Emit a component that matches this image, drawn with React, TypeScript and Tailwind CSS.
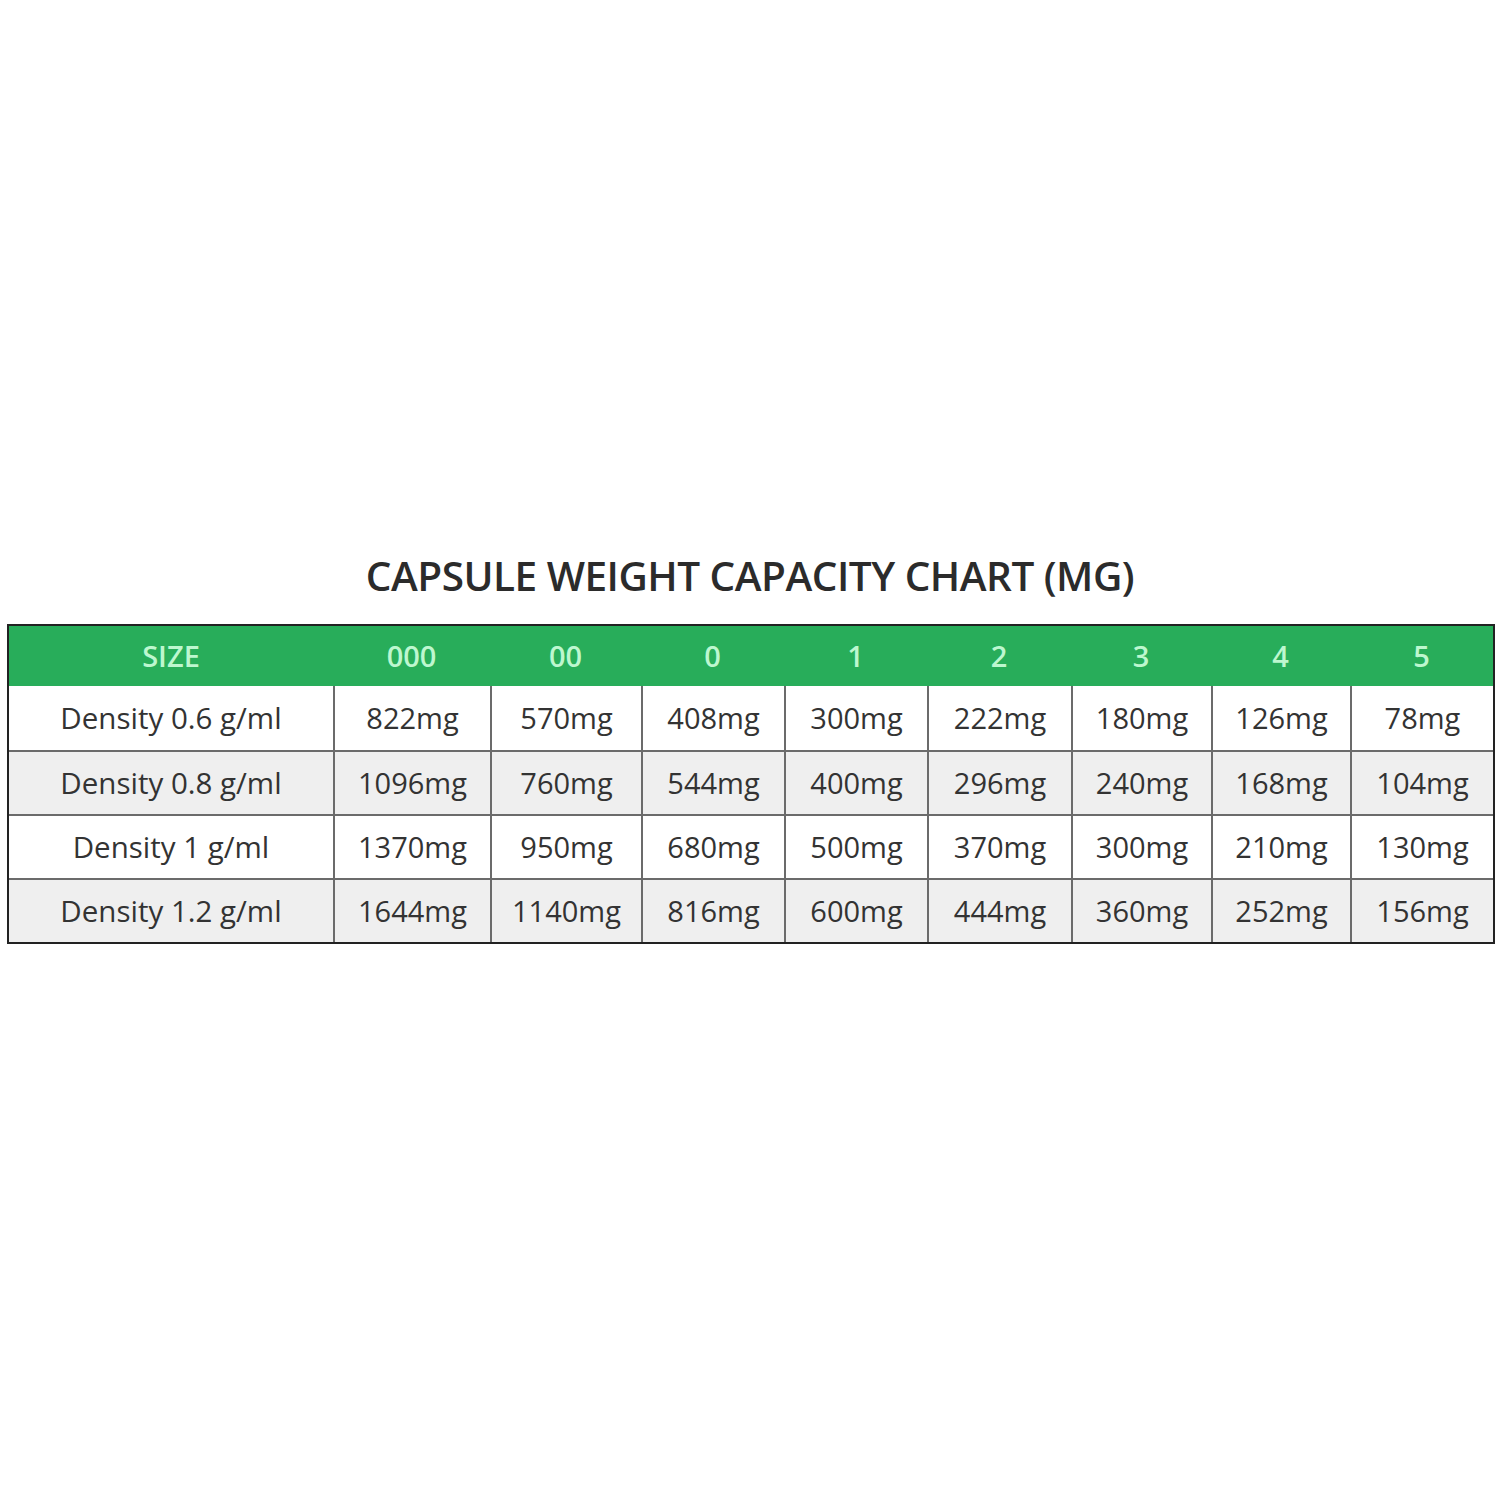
const sizes = ["000", "00", "0", "1", "2", "3", "4", "5"];

const rows = [
  { label: "Density 0.6 g/ml", values: ["822mg", "570mg", "408mg", "300mg", "222mg", "180mg", "126mg", "78mg"] },
  { label: "Density 0.8 g/ml", values: ["1096mg", "760mg", "544mg", "400mg", "296mg", "240mg", "168mg", "104mg"] },
  { label: "Density 1 g/ml", values: ["1370mg", "950mg", "680mg", "500mg", "370mg", "300mg", "210mg", "130mg"] },
  { label: "Density 1.2 g/ml", values: ["1644mg", "1140mg", "816mg", "600mg", "444mg", "360mg", "252mg", "156mg"] },
];

const cols = "grid grid-cols-[324px_157px_151px_143px_143px_144px_140px_139px_143px]";

export default function App() {
  return (
    <div className="h-[1500px] w-[1500px] bg-white font-['Open_Sans',sans-serif]">
      <div className="pt-[548px]">
        <h1 className="text-center text-[40.5px] font-semibold leading-[56px] tracking-[-0.5px] text-[#2b2b2b]">
          CAPSULE WEIGHT CAPACITY CHART (MG)
        </h1>
      </div>

      <div className="ml-[7px] mt-[20px] w-[1488px] border-2 border-[#222]">
        <div className={`${cols} h-[60px] bg-[#28ad5a]`}>
          <div className="flex items-center justify-center text-[29px] font-semibold text-[#bdf7cf]">SIZE</div>
          {sizes.map((s) => (
            <div key={s} className="flex items-center justify-center text-[29px] font-semibold text-[#bdf7cf]">
              {s}
            </div>
          ))}
        </div>

        {rows.map((row, i) => (
          <div
            key={row.label}
            className={`${cols} h-[64px] ${i % 2 === 1 ? "bg-[#efefef]" : "bg-white"} ${i > 0 ? "border-t-2 border-[#6b6b6b]" : ""}`}
          >
            <div className="flex items-center justify-center text-[29.5px] text-[#333]">{row.label}</div>
            {row.values.map((v, j) => (
              <div key={j} className="flex items-center justify-center border-l-2 border-[#6b6b6b] text-[29px] text-[#333]">
                {v}
              </div>
            ))}
          </div>
        ))}
      </div>
    </div>
  );
}
